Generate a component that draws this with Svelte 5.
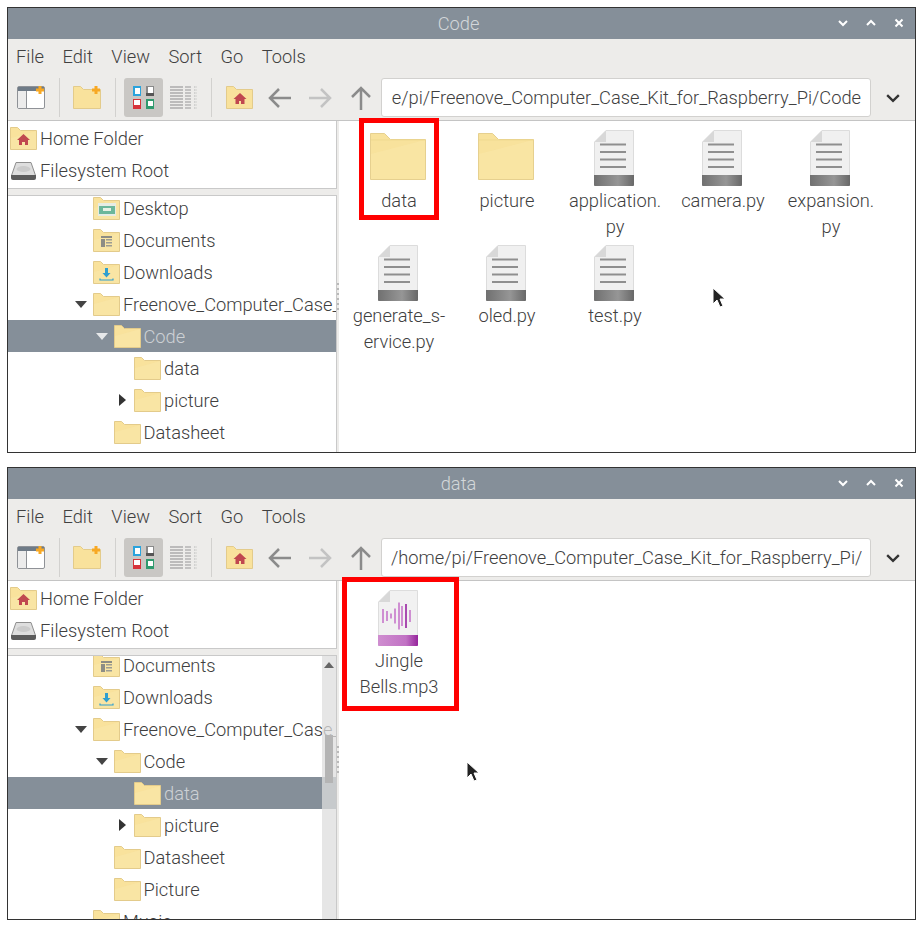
<script>
	const menus = ['File', 'Edit', 'View', 'Sort', 'Go', 'Tools'];

	const codeFiles = [
		{ name: 'data', icon: 'folder' },
		{ name: 'picture', icon: 'folder' },
		{ name: 'application.\npy', icon: 'file' },
		{ name: 'camera.py', icon: 'file' },
		{ name: 'expansion.\npy', icon: 'file' },
		{ name: 'generate_s-\nervice.py', icon: 'file' },
		{ name: 'oled.py', icon: 'file' },
		{ name: 'test.py', icon: 'file' }
	];

	const codeTree = [
		{ name: 'Desktop', level: 0, emblem: 'desktop' },
		{ name: 'Documents', level: 0, emblem: 'docs' },
		{ name: 'Downloads', level: 0, emblem: 'down' },
		{ name: 'Freenove_Computer_Case_Kit_for_Raspberry_Pi', level: 0, arrow: 'open' },
		{ name: 'Code', level: 1, arrow: 'open', selected: true },
		{ name: 'data', level: 2 },
		{ name: 'picture', level: 2, arrow: 'closed' },
		{ name: 'Datasheet', level: 1 },
		{ name: 'Picture', level: 1 }
	];

	const dataTree = [
		{ name: 'Documents', level: 0, emblem: 'docs' },
		{ name: 'Downloads', level: 0, emblem: 'down' },
		{ name: 'Freenove_Computer_Case_Kit_for_Raspberry_Pi', level: 0, arrow: 'open' },
		{ name: 'Code', level: 1, arrow: 'open' },
		{ name: 'data', level: 2, selected: true },
		{ name: 'picture', level: 2, arrow: 'closed' },
		{ name: 'Datasheet', level: 1 },
		{ name: 'Picture', level: 1 },
		{ name: 'Music', level: 0 }
	];

	const bars = [[5, 14], [9, 10], [13, 5], [17, 15], [21, 27], [24, 20], [28, 24], [32, 12]];
</script>

{#snippet folder(emblem)}
	<svg class="folder" viewBox="0 0 27 23">
		<path d="M.5 22.500V.5h7l3 3h16v19z" fill="#f9e29c" stroke="#e3cb8b" />
		<path d="M1 22V11L26 4v18z" fill="#fae7ac" opacity=".5" />
		{#if emblem === 'home'}
			<path d="M13.500 7l6.500 6h-2v5h-3v-3h-3v3H9v-5H7z" fill="#c0484f" />
		{:else if emblem === 'desktop'}
			<rect x="5" y="6" width="18" height="13" fill="#e6ece4" />
			<rect x="6" y="9" width="16" height="8" fill="#6cb79b" />
			<rect x="10" y="11" width="8" height="3" fill="#e8f0e4" />
		{:else if emblem === 'docs'}
			<path d="M8 7h11v2H8zM8 10h4v8H8z" fill="#8d8d85" />
			<path d="M13 10h6v1.500h-6zM13 13h6v1.500h-6zM13 16h6v1.500h-6z" fill="#9c9c92" />
		{:else if emblem === 'down'}
			<path d="M12 7h3v5h2.500l-4 4.500-4-4.500H12z" fill="#2f9fd0" />
			<path d="M7 17.500v1.500h13v-1.500" fill="none" stroke="#2f9fd0" stroke-width="1.200" />
		{/if}
	</svg>
{/snippet}

{#snippet largeFolder()}
	<svg class="large-folder" viewBox="0 0 56 48">
		<path d="M.5 47.500V1.500h14l6 6h35v40z" fill="#f8e29c" stroke="#e6d08f" />
		<path d="M1 47V22L55 8v39z" fill="#fbe9ae" opacity=".45" />
		<path d="M1 8h54" stroke="#efd98f" />
	</svg>
{/snippet}

{#snippet fileIcon()}
	<svg class="file" viewBox="0 0 40 56">
		<defs>
			<linearGradient id="file-bar">
				<stop offset="0" stop-color="#707070" />
				<stop offset=".6" stop-color="#969696" />
				<stop offset="1" stop-color="#686868" />
			</linearGradient>
		</defs>
		<path d="M12 .5h27.500v55H.5V12z" fill="#f0f0f0" stroke="#dcdcdc" />
		<path d="M12 .5V12H.5z" fill="#d8d8d8" />
		<path d="M6 14.500h26M6 22h26M6 29.500h26M6 37h26" stroke="#8f8f8f" stroke-width="2" />
		<path d="M0 45h40v10a1 1 0 0 1-1 1H1a1 1 0 0 1-1-1z" fill="url(#file-bar)" />
	</svg>
{/snippet}

{#snippet audioIcon()}
	<svg class="file" viewBox="0 0 40 56">
		<defs>
			<linearGradient id="audio-bar">
				<stop offset="0" stop-color="#cf8ed0" />
				<stop offset=".7" stop-color="#c172c4" />
				<stop offset="1" stop-color="#96259c" />
			</linearGradient>
		</defs>
		<path d="M12 .5h27.500v55H.5V12z" fill="#f1f1f1" stroke="#dddddd" />
		<path d="M12 .5V12H.5z" fill="#d8d8d8" />
		{#each bars as [x, h]}
			<rect x={x - 1} y={26 - h / 2} width="2" height={h} fill={x === 28 ? '#a94bb0' : '#cf8fd2'} />
		{/each}
		<path d="M0 45h40v10a1 1 0 0 1-1 1H1a1 1 0 0 1-1-1z" fill="url(#audio-bar)" />
	</svg>
{/snippet}

{#snippet tree(rows, offset, scrolled)}
	<div class="tree">
		<div class="tree-rows" style="margin-top: {offset}px">
			{#each rows as row}
				<div class="tree-row" class:selected={row.selected} style="padding-left: {row.level * 20.500 + 85}px">
					{#if row.arrow === 'open'}
						<span class="arrow-open"></span>
					{:else if row.arrow === 'closed'}
						<span class="arrow-closed"></span>
					{/if}
					{@render folder(row.emblem)}
					<span class="tree-label">{row.name}</span>
				</div>
			{/each}
		</div>
		{#if scrolled}
			<div class="scrollbar">
				<span class="scroll-up"></span>
				<span class="scroll-thumb"></span>
			</div>
		{/if}
	</div>
{/snippet}

{#snippet win(title, path, alignEnd, rows, offset, scrolled, content)}
	<div class="window">
		<div class="titlebar">
			<span>{title}</span>
			<div class="controls">
				<svg viewBox="0 0 12 12"><path d="M2 4l4 4 4-4" /></svg>
				<svg viewBox="0 0 12 12"><path d="M2 8l4-4 4 4" /></svg>
				<svg viewBox="0 0 12 12"><path d="M2.500 2.500l7 7M9.500 2.500l-7 7" /></svg>
			</div>
		</div>
		<div class="menubar">
			{#each menus as m}
				<span>{m}</span>
			{/each}
		</div>
		<div class="toolbar">
			<svg class="tool" viewBox="0 0 28 23">
				<rect x=".5" y=".5" width="27" height="22" rx="1.500" fill="#fff" stroke="#8f9297" />
				<rect x="1" y="1" width="26" height="4" fill="#6f7b87" />
				<rect x="1" y="5" width="8" height="17" fill="#ececec" />
				<path d="M9.500 5v17" stroke="#8f9297" />
				<path d="M23 0v8M19 4h8" stroke="#f7a823" stroke-width="3" />
			</svg>
			<span class="sep"></span>
			<svg class="tool new-folder" viewBox="0 0 28 23">
				<path d="M.5 22.500V.5h7l3 3h17v19z" fill="#f9e29c" stroke="#e3cb8b" />
				<path d="M23 0v8M19 4h8" stroke="#f7a823" stroke-width="3" />
			</svg>
			<span class="sep"></span>
			<div class="toggle">
				<svg viewBox="0 0 21 23">
					<rect x="0" y="0" width="8" height="10" fill="#2ba3dc" />
					<rect x="2" y="2" width="5" height="6" fill="#fff" />
					<rect x="13" y="0" width="8" height="10" fill="#8a8a8a" />
					<rect x="15" y="1" width="5" height="6" fill="#fff" />
					<rect x="13" y="7" width="8" height="3" fill="#555" />
					<rect x="0" y="13" width="8" height="10" fill="#d6333a" />
					<rect x="1" y="14" width="6" height="5" fill="#fff" />
					<rect x="13" y="13" width="8" height="10" fill="#2f9a6e" />
					<rect x="15" y="15" width="5" height="5" fill="#fff" />
				</svg>
			</div>
			<svg class="tool list" viewBox="0 0 27 24">
				{#each [1, 4, 7, 10, 13, 16, 19, 22] as y}
					<path d="M0 {y}h13" stroke="#9a9a9a" stroke-width="1.200" />
					<path d="M15 {y}h6" stroke="#a5a5a5" stroke-width="1.200" />
					<path d="M24 {y}h3" stroke="#b5b5b5" stroke-width="1.200" stroke-dasharray="1.500 1" />
				{/each}
			</svg>
			<span class="sep"></span>
			<svg class="tool home" viewBox="0 0 27 23">
				<path d="M.5 22.500V.5h7l3 3h16v19z" fill="#f9e29c" stroke="#e3cb8b" />
				<path d="M14 7l6.500 6h-2v5h-3.500v-3h-2v3H9.500v-5h-2z" fill="#c0484f" />
			</svg>
			<svg class="nav back" viewBox="0 0 24 24"><path d="M23 12H2M11 3l-9 9 9 9" stroke="#8b8b8b" /></svg>
			<svg class="nav forward" viewBox="0 0 24 24"><path d="M1 12h21M13 3l9 9-9 9" stroke="#c3c3c3" /></svg>
			<svg class="nav up" viewBox="0 0 24 24"><path d="M12 24V2M3 11l9-9 9 9" stroke="#8b8b8b" /></svg>
			<div class="address">
				<div class="address-clip" class:end={alignEnd}><span>{path}</span></div>
			</div>
			<svg class="chevron" viewBox="0 0 12 12"><path d="M1 3.500l5 5 5-5" /></svg>
		</div>
		<div class="body">
			<div class="side">
				<div class="places">
					<div class="place">
						{@render folder('home')}
						<span>Home Folder</span>
					</div>
					<div class="place">
						<svg class="folder" viewBox="0 0 27 23">
							<path d="M6 3.500h15l4.500 13h-24z" fill="#dedede" stroke="#8e8e8e" />
							<ellipse cx="13.500" cy="10" rx="7" ry="3" fill="#cbcbcb" />
							<path d="M1 16h25v3a2 2 0 0 1-2 2H3a2 2 0 0 1-2-2z" fill="#5c5c5c" />
						</svg>
						<span>Filesystem Root</span>
					</div>
				</div>
				{@render tree(rows, offset, scrolled)}
			</div>
			<div class="handle"><span></span></div>
			<div class="grid">
				{@render content()}
			</div>
		</div>
	</div>
{/snippet}

{#snippet codeGrid()}
	{#each codeFiles as f}
		<div class="item">
			<div class="item-icon">
				{#if f.icon === 'folder'}
					{@render largeFolder()}
				{:else}
					{@render fileIcon()}
				{/if}
			</div>
			<div class="item-label">{f.name}</div>
		</div>
	{/each}
	<div class="mark mark-data"></div>
	<svg class="cursor cursor-code" viewBox="0 0 14 22"><path d="M1 1v16l4-4 3 7 3-1-3-7h5z" /></svg>
{/snippet}

{#snippet dataGrid()}
	<div class="item">
		<div class="item-icon">{@render audioIcon()}</div>
		<div class="item-label">Jingle{'\n'}Bells.mp3</div>
	</div>
	<div class="mark mark-song"></div>
	<svg class="cursor cursor-data" viewBox="0 0 14 22"><path d="M1 1v16l4-4 3 7 3-1-3-7h5z" /></svg>
{/snippet}

<div class="page">
	{@render win('Code', '/home/pi/Freenove_Computer_Case_Kit_for_Raspberry_Pi/Code', true, codeTree, -4, false, codeGrid)}
	{@render win('data', '/home/pi/Freenove_Computer_Case_Kit_for_Raspberry_Pi/data', false, dataTree, -7, true, dataGrid)}
</div>

<style>
	:global(body) {
		background: #fff;
	}

	.page {
		width: 923px;
		height: 926px;
		padding: 7px 7px 0;
		box-sizing: border-box;
		display: flex;
		flex-direction: column;
		gap: 14px;
		font-family: Roboto, 'Liberation Sans', sans-serif;
		font-size: 18.300px;
		font-weight: 300;
		color: #404040;
	}

	.window {
		width: 909px;
		height: 446px;
		box-sizing: border-box;
		border: 1px solid #333;
		display: flex;
		flex-direction: column;
		background: #edecea;
		flex: none;
	}

	.window:last-child {
		height: 453px;
	}

	.titlebar {
		height: 31px;
		flex: none;
		box-sizing: border-box;
		padding-right: 6px;
		background: #858f99;
		color: #d3d7da;
		display: flex;
		align-items: center;
		justify-content: center;
		position: relative;
	}

	.controls {
		position: absolute;
		right: 10px;
		top: 9px;
		display: flex;
		gap: 16px;
	}

	.controls svg {
		width: 12px;
		height: 12px;
		fill: none;
		stroke: #fff;
		stroke-width: 2;
	}

	.menubar {
		height: 35px;
		flex: none;
		display: flex;
		align-items: center;
		padding-left: 8px;
		gap: 18.500px;
	}

	.toolbar {
		height: 47px;
		flex: none;
		box-sizing: border-box;
		border-bottom: 1px solid #c4c4c4;
		padding: 4px 0 3px 9px;
		display: flex;
		align-items: center;
	}

	.tool {
		width: 28px;
		height: 23px;
		flex: none;
	}

	.new-folder {
		margin-left: -1px;
	}

	.sep {
		width: 1px;
		height: 39px;
		background: #d2d1cf;
		margin: 0 14px;
		flex: none;
	}

	.toggle {
		width: 39px;
		height: 39px;
		box-sizing: border-box;
		background: #c9c7c4;
		border-radius: 3px;
		margin-left: -6px;
		display: flex;
		align-items: center;
		justify-content: center;
		flex: none;
	}

	.toggle svg {
		width: 21px;
		height: 23px;
	}

	.list {
		width: 27px;
		height: 24px;
		margin-left: 7px;
	}

	.home {
		width: 27px;
	}

	.nav {
		width: 24px;
		height: 24px;
		fill: none;
		stroke-width: 2.500;
		flex: none;
	}

	.back {
		margin-left: 15px;
	}

	.forward {
		margin-left: 16px;
	}

	.up {
		margin-left: 17px;
	}

	.address {
		width: 490px;
		height: 39px;
		margin-left: 8px;
		box-sizing: border-box;
		background: #fff;
		border: 1px solid #d2d1cf;
		border-radius: 3px;
		padding: 0 8px 0 9px;
		display: flex;
		align-items: center;
		flex: none;
	}

	.address-clip {
		flex: 1;
		min-width: 0;
		display: flex;
		overflow: hidden;
		white-space: nowrap;
	}

	.address-clip.end {
		justify-content: flex-end;
		padding-right: 1px;
	}

	.chevron {
		width: 14px;
		height: 14px;
		margin-left: 15px;
		fill: none;
		stroke: #333;
		stroke-width: 2;
		flex: none;
	}

	.body {
		flex: 1;
		min-height: 0;
		display: flex;
	}

	.side {
		width: 329px;
		flex: none;
		display: flex;
		flex-direction: column;
		gap: 6px;
	}

	.places {
		height: 68px;
		flex: none;
		box-sizing: border-box;
		background: #fff;
		border-right: 1px solid #c9c9c9;
		border-bottom: 1px solid #c9c9c9;
		padding-top: 1px;
	}

	.place {
		height: 32px;
		display: flex;
		align-items: center;
		padding-left: 2px;
		gap: 3px;
	}

	.folder {
		width: 27px;
		height: 23px;
		flex: none;
	}

	.tree {
		flex: 1;
		min-height: 0;
		background: #fff;
		border-top: 1px solid #c9c9c9;
		border-right: 1px solid #c9c9c9;
		overflow: hidden;
		position: relative;
	}

	.tree-row {
		height: 32px;
		box-sizing: border-box;
		display: flex;
		align-items: center;
		gap: 3px;
		white-space: nowrap;
		overflow: hidden;
		position: relative;
	}

	.tree-label {
		overflow: hidden;
	}

	.tree-row.selected {
		background: #858f99;
	}

	.tree-row.selected .tree-label {
		color: #cdd1d5;
	}

	.arrow-open {
		position: absolute;
		width: 0;
		height: 0;
		margin-left: -18px;
		border-left: 6.500px solid transparent;
		border-right: 6.500px solid transparent;
		border-top: 7px solid #444;
	}

	.selected .arrow-open {
		border-top-color: #e6e8ea;
	}

	.arrow-closed {
		position: absolute;
		width: 0;
		height: 0;
		margin-left: -15px;
		border-top: 6.500px solid transparent;
		border-bottom: 6.500px solid transparent;
		border-left: 7px solid #333;
	}

	.scrollbar {
		position: absolute;
		top: 0;
		right: 0;
		bottom: 0;
		width: 14px;
		background: rgba(222, 222, 222, 0.75);
	}

	.scroll-up {
		position: absolute;
		top: 6px;
		left: 2px;
		width: 0;
		height: 0;
		border-left: 5.500px solid transparent;
		border-right: 5.500px solid transparent;
		border-bottom: 6px solid #666;
	}

	.scroll-thumb {
		position: absolute;
		top: 79px;
		left: 3px;
		width: 8px;
		height: 48px;
		background: #b4b4b4;
	}

	.handle {
		width: 2px;
		flex: none;
		display: flex;
		align-items: center;
		padding-top: 20px;
		box-sizing: border-box;
	}

	.handle span {
		width: 2px;
		height: 28px;
		background: repeating-linear-gradient(#b9b9b9 0 2px, transparent 2px 5px);
	}

	.grid {
		flex: 1;
		background: #fff;
		padding-left: 6px;
		display: grid;
		grid-template-columns: repeat(5, 108px);
		grid-auto-rows: 115px;
		position: relative;
	}

	.item {
		padding-top: 9px;
		display: flex;
		flex-direction: column;
		align-items: center;
	}

	.item-icon {
		height: 56px;
		margin-right: 2px;
		display: flex;
		align-items: center;
		justify-content: center;
	}

	.large-folder {
		width: 56px;
		height: 48px;
		margin-bottom: 4px;
	}

	.file {
		width: 40px;
		height: 56px;
	}

	.item-label {
		margin-top: 2px;
		line-height: 26px;
		text-align: center;
		white-space: pre-line;
	}

	.mark {
		position: absolute;
		box-sizing: border-box;
		border: 5px solid #ff0000;
	}

	.mark-data {
		left: 20px;
		top: -3px;
		width: 80px;
		height: 102px;
	}

	.mark-song {
		left: 3px;
		top: -4px;
		width: 117px;
		height: 134px;
	}

	.cursor {
		position: absolute;
		width: 14px;
		height: 22px;
		fill: #222;
		stroke: #fff;
	}

	.cursor-code {
		left: 373px;
		top: 166px;
	}

	.cursor-data {
		left: 127px;
		top: 180px;
	}
</style>
